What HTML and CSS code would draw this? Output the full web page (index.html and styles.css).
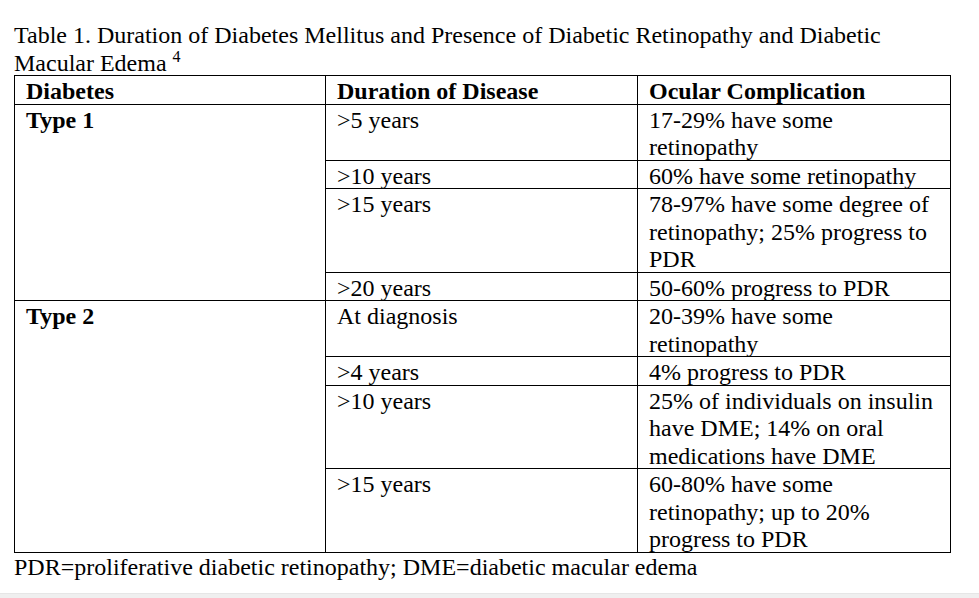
FILE: index.html
```html
<!DOCTYPE html>
<html lang="en">
<head>
<meta charset="utf-8">
<title>Table 1</title>
<link rel="stylesheet" href="styles.css">
</head>
<body>
<div class="page">
  <p class="caption">Table 1. Duration of Diabetes Mellitus and Presence of Diabetic Retinopathy and Diabetic<br>Macular Edema <sup class="ref">4</sup></p>
  <table class="data">
    <colgroup>
      <col class="c1"><col class="c2"><col class="c3">
    </colgroup>
    <thead>
      <tr><th><div class="in">Diabetes</div></th><th><div class="in">Duration of Disease</div></th><th><div class="in">Ocular Complication</div></th></tr>
    </thead>
    <tbody>
      <tr><td rowspan="4" class="type"><div class="in">Type 1</div></td><td><div class="in">&gt;5 years</div></td><td><div class="in">17-29% have some<br>retinopathy</div></td></tr>
      <tr><td><div class="in">&gt;10 years</div></td><td><div class="in">60% have some retinopathy</div></td></tr>
      <tr><td><div class="in">&gt;15 years</div></td><td><div class="in">78-97% have some degree of<br>retinopathy; 25% progress to<br>PDR</div></td></tr>
      <tr><td><div class="in">&gt;20 years</div></td><td><div class="in">50-60% progress to PDR</div></td></tr>
      <tr><td rowspan="4" class="type"><div class="in">Type 2</div></td><td><div class="in">At diagnosis</div></td><td><div class="in">20-39% have some<br>retinopathy</div></td></tr>
      <tr><td><div class="in">&gt;4 years</div></td><td><div class="in">4% progress to PDR</div></td></tr>
      <tr><td><div class="in">&gt;10 years</div></td><td><div class="in">25% of individuals on insulin<br>have DME; 14% on oral<br>medications have DME</div></td></tr>
      <tr><td><div class="in">&gt;15 years</div></td><td><div class="in">60-80% have some<br>retinopathy; up to 20%<br>progress to PDR</div></td></tr>
    </tbody>
  </table>
  <p class="note">PDR=proliferative diabetic retinopathy; DME=diabetic macular edema</p>
</div>
<div class="bar"></div>
</body>
</html>
```
FILE: styles.css
```css
html, body {
  margin: 0;
  padding: 0;
  background: #ffffff;
}
body {
  width: 979px;
  height: 598px;
  overflow: hidden;
  display: flex;
  flex-direction: column;
  font-family: "Liberation Serif", "Times New Roman", serif;
  font-size: 24px;
  line-height: 27.5px;
  color: #000;
}
.page {
  flex: 1;
  padding: 20px 0 0 14px;
}
.caption {
  margin: 0;
  padding-top: 2px;
  white-space: nowrap;
}
.ref {
  font-size: 16px;
  line-height: 0;
  vertical-align: 9px;
}
.data {
  border-collapse: collapse;
  table-layout: fixed;
  width: 936px;
  margin-top: -2px;
}
.c1 { width: 311px; }
.c2 { width: 312px; }
.c3 { width: 313px; }
.data th,
.data td {
  border: 1px solid #000;
  padding: 0 4px 0 11px;
  text-align: left;
  vertical-align: top;
  white-space: nowrap;
}
.data th,
.data td.type {
  font-weight: bold;
}
.in {
  margin-top: 2px;
  margin-bottom: -2px;
}
.note {
  margin: 0;
  padding-top: 1px;
}
.bar {
  height: 5px;
  background: #efefef;
  border-top: 1px solid #e6e6e6;
  box-sizing: border-box;
}
```
